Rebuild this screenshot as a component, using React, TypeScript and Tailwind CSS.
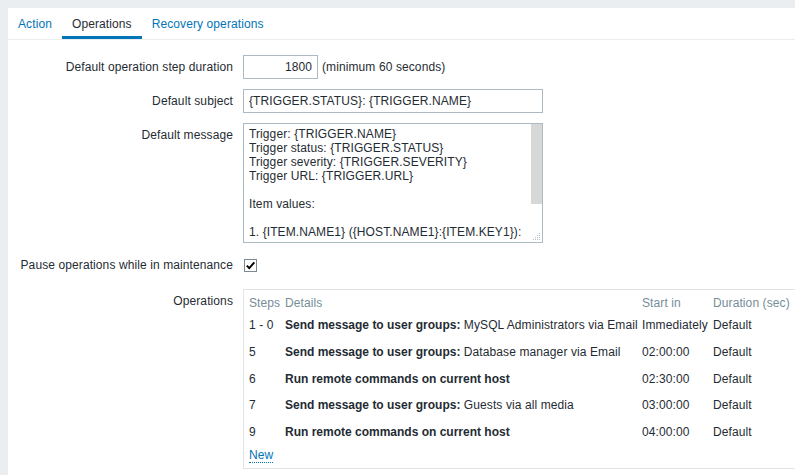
import React from 'react';

const tabs = [
  { id: 'action', label: 'Action' },
  { id: 'operations', label: 'Operations' },
  { id: 'recovery', label: 'Recovery operations' },
];

// only the part of the message that fits in the visible box
const defaultMessage = [
  'Trigger: {TRIGGER.NAME}',
  'Trigger status: {TRIGGER.STATUS}',
  'Trigger severity: {TRIGGER.SEVERITY}',
  'Trigger URL: {TRIGGER.URL}',
  '',
  'Item values:',
  '',
  '1. {ITEM.NAME1} ({HOST.NAME1}:{ITEM.KEY1}):',
].join('\n');

type Operation = {
  steps: string;
  title: string;
  detail?: string;
  start: string;
  duration: string;
};

const operations: Operation[] = [
  { steps: '1 - 0', title: 'Send message to user groups:', detail: 'MySQL Administrators via Email', start: 'Immediately', duration: 'Default' },
  { steps: '5', title: 'Send message to user groups:', detail: 'Database manager via Email', start: '02:00:00', duration: 'Default' },
  { steps: '6', title: 'Run remote commands on current host', start: '02:30:00', duration: 'Default' },
  { steps: '7', title: 'Send message to user groups:', detail: 'Guests via all media', start: '03:00:00', duration: 'Default' },
  { steps: '9', title: 'Run remote commands on current host', start: '04:00:00', duration: 'Default' },
];

function FormRow({ label, children, className = '' }: { label: string; children: React.ReactNode; className?: string }) {
  return (
    <div className={`flex gap-[10px] ${className}`}>
      <div className="w-[225px] shrink-0 text-right pt-[5px]">{label}</div>
      <div className="flex items-start">{children}</div>
    </div>
  );
}

// textarea look-alike: headless browser hides native scrollbars
function MessageBox({ text }: { text: string }) {
  return (
    <div className="relative w-[300px] h-[120px] border border-[#acbbc2] bg-white">
      <div className="pl-[5px] pr-[11px] pt-[3px]">
        <div className="h-[112px] overflow-hidden whitespace-pre-wrap break-words">{text}</div>
      </div>
      {/* scrollbar thumb */}
      <div className="absolute right-0 top-0 w-[11px] h-[80px] bg-[#d7d7d7]" />
      {/* resize grip */}
      <svg className="absolute right-[1px] bottom-[1px]" width="9" height="9" viewBox="0 0 9 9">
        <g fill="#b9c4ca">
          <rect x="7" y="1" width="1" height="1" />
          <rect x="5" y="3" width="1" height="1" />
          <rect x="7" y="3" width="1" height="1" />
          <rect x="3" y="5" width="1" height="1" />
          <rect x="5" y="5" width="1" height="1" />
          <rect x="7" y="5" width="1" height="1" />
          <rect x="1" y="7" width="1" height="1" />
          <rect x="3" y="7" width="1" height="1" />
          <rect x="5" y="7" width="1" height="1" />
          <rect x="7" y="7" width="1" height="1" />
        </g>
      </svg>
    </div>
  );
}

export default function App() {
  const activeTab = 'operations';

  return (
    <div className="w-[795px] h-[475px] overflow-hidden bg-[#ebeef0] pt-[8px] pl-[8px] font-['Liberation_Sans',Arial,sans-serif] text-[12px] leading-[14px] tracking-[0.1px] text-[#1f2c33]">
      <div className="bg-white w-[900px] h-[600px]">
        {/* Tabs */}
        <div className="flex h-[32px] border-b border-[#ebeef0]">
          {tabs.map((tab) => (
            <div
              key={tab.id}
              className={`flex items-center px-[10px] h-[31px] ${
                activeTab === tab.id
                  ? 'text-[#1f2c33] border-b-[3px] border-[#0275b8] pt-[3px]'
                  : 'text-[#0275b8]'
              }`}
            >
              {tab.label}
            </div>
          ))}
        </div>

        {/* Form */}
        <div className="pt-[15px]">
          <FormRow label="Default operation step duration">
            <input
              type="text"
              readOnly
              value="1800"
              className="w-[75px] h-[24px] border border-[#acbbc2] px-[5px] text-right outline-none"
            />
            <span className="ml-[4px] self-center">(minimum 60 seconds)</span>
          </FormRow>

          <FormRow label="Default subject" className="mt-[10px]">
            <input
              type="text"
              readOnly
              value="{TRIGGER.STATUS}: {TRIGGER.NAME}"
              className="w-[300px] h-[24px] border border-[#acbbc2] px-[5px] outline-none"
            />
          </FormRow>

          <FormRow label="Default message" className="mt-[10px]">
            <MessageBox text={defaultMessage} />
          </FormRow>

          <div className="flex gap-[10px] mt-[10px] h-[24px] items-center">
            <div className="w-[225px] shrink-0 text-right">Pause operations while in maintenance</div>
            <span className="ml-[1px] w-[13px] h-[13px] border border-[#7b8a92] bg-white flex items-center justify-center">
              <svg width="11" height="11" viewBox="0 0 11 11">
                <path d="M1.8 5.6 L4.3 8.1 L9.3 2.3" fill="none" stroke="#000" strokeWidth="2" />
              </svg>
            </span>
          </div>

          <FormRow label="Operations" className="mt-[12px]">
            <div className="w-[600px] border border-[#dfe4e7] pl-[5px] pt-[6px] pb-[5px]">
              <div className="grid grid-cols-[36px_357px_71px_1fr] text-[#768d99]">
                <div>Steps</div>
                <div>Details</div>
                <div>Start in</div>
                <div>Duration (sec)</div>
              </div>
              <div className="mt-[8px] flex flex-col gap-[12.75px]">
                {operations.map((op, i) => (
                  <div key={i} className="grid grid-cols-[36px_357px_71px_1fr]">
                    <div>{op.steps}</div>
                    <div>
                      <span className="font-bold tracking-normal">{op.title}</span>
                      {op.detail && <> {op.detail}</>}
                    </div>
                    <div>{op.start}</div>
                    <div>{op.duration}</div>
                  </div>
                ))}
              </div>
              <div className="mt-[8.5px]">
                <a href="#" className="inline-block text-[#0275b8] border-b border-dotted border-[#0275b8]">
                  New
                </a>
              </div>
            </div>
          </FormRow>
        </div>
      </div>
    </div>
  );
}
